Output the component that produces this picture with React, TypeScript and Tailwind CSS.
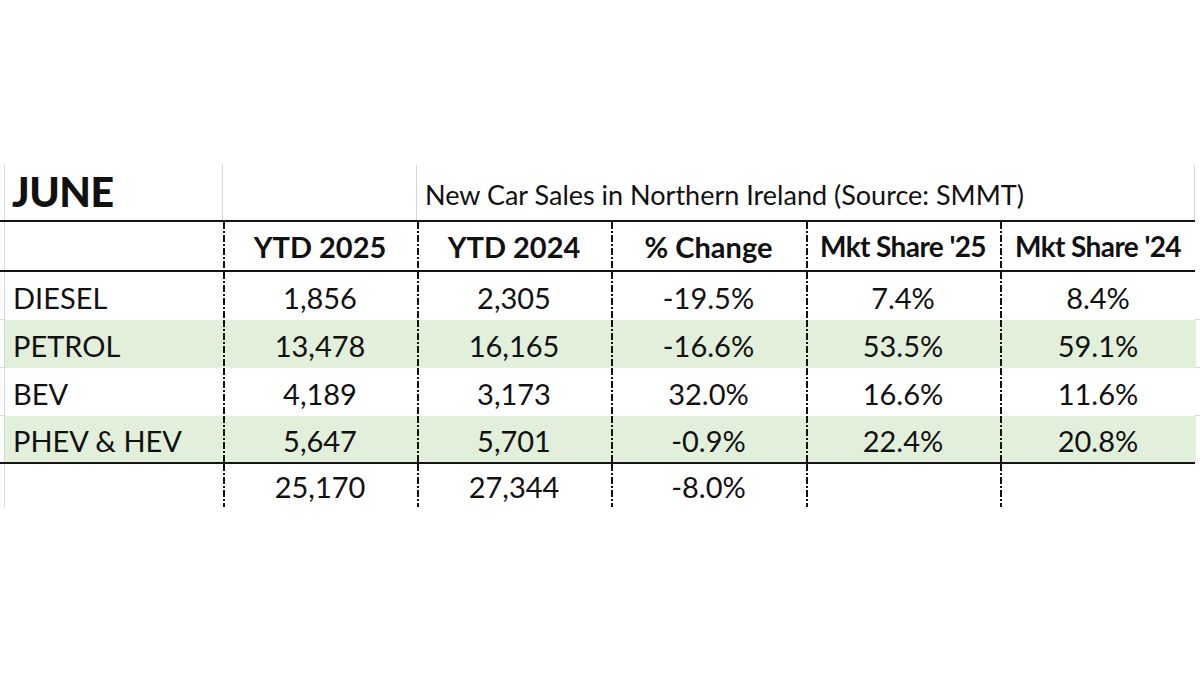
import React from 'react';

const rows = [
  { label: 'DIESEL', a: '1,856', b: '2,305', c: '-19.5%', d: '7.4%', e: '8.4%', green: false },
  { label: 'PETROL', a: '13,478', b: '16,165', c: '-16.6%', d: '53.5%', e: '59.1%', green: true },
  { label: 'BEV', a: '4,189', b: '3,173', c: '32.0%', d: '16.6%', e: '11.6%', green: false },
  { label: 'PHEV & HEV', a: '5,647', b: '5,701', c: '-0.9%', d: '22.4%', e: '20.8%', green: true },
];

const dashDot =
  'bg-[image:repeating-linear-gradient(to_bottom,#111_0,#111_7px,transparent_7px,transparent_9px,#111_9px,#111_11px,transparent_11px,transparent_13px)] bg-no-repeat bg-[length:2px_100%] bg-left';

// one row of the sheet: small gridline stubs outside the table on both sides
const Row = ({ children, h, stub = true }: { children: React.ReactNode; h: string; stub?: boolean }) => (
  <div className={`flex ${h}`}>
    <div className={`w-[4px] ${stub ? 'border-b border-[#dadada]' : ''}`} />
    <div className="grid grid-cols-[218px_194px_194px_195px_194px_196px] w-[1191px] border-l border-r border-[#d6d6d6]">
      {children}
    </div>
    <div className={`w-[5px] ${stub ? 'border-b border-[#dadada]' : ''}`} />
  </div>
);

const Cell = ({ children, line = true, green = false, left = false, pad = 'pt-[2px]' }: { children?: React.ReactNode; line?: boolean; green?: boolean; left?: boolean; pad?: string }) => (
  <div
    className={`flex items-center ${pad} ${left ? 'justify-start pl-[8px]' : 'justify-center'} ${green ? 'bg-[#e2efda]' : 'bg-white'} ${line ? dashDot : ''}`}
  >
    {children}
  </div>
);

const BlackLine = () => (
  <div className="flex">
    <div className="h-[2px] w-[1195px] bg-[#141414]" />
  </div>
);

const num = 'text-[29px] leading-none';
const head = 'text-[29px] font-bold leading-none';
const share = 'text-[28px] font-bold leading-none tracking-[-0.6px]';

export default function App() {
  return (
    <div className="w-[1200px] h-[675px] bg-white font-['Lato',sans-serif] text-[#111] overflow-hidden">
      <div className="h-[165px]" />

      {/* title row */}
      <div className="flex h-[55px]">
        <div className="w-[4px]" />
        <div className="flex w-[1191px] border-l border-r border-[#d6d6d6]">
          <div className="w-[218px] border-r border-[#d6d6d6] flex items-end pl-[7px] pb-[8px]">
            <span className="text-[41px] font-black leading-none tracking-[-0.5px]">JUNE</span>
          </div>
          <div className="w-[194px] border-r border-[#d6d6d6]" />
          <div className="flex-1 flex items-end pl-[8px] pb-[12px]">
            <span className="text-[27px] leading-none whitespace-nowrap">New Car Sales in Northern Ireland (Source: SMMT)</span>
          </div>
        </div>
        <div className="w-[5px]" />
      </div>

      <BlackLine />

      {/* header row */}
      <Row h="h-[48px]" stub={false}>
        <Cell line={false} pad="pt-0" />
        <Cell pad="pt-0"><span className={head}>YTD 2025</span></Cell>
        <Cell pad="pt-0"><span className={head}>YTD 2024</span></Cell>
        <Cell pad="pt-0"><span className={head}>% Change</span></Cell>
        <Cell pad="pt-0"><span className={share}>Mkt Share '25</span></Cell>
        <Cell pad="pt-0"><span className={share}>Mkt Share '24</span></Cell>
      </Row>

      <BlackLine />

      {rows.map((r, i) => (
        <Row key={r.label} h={i === 3 ? 'h-[46px]' : 'h-[48px]'} stub={i < 3}>
          <Cell line={false} green={r.green} left><span className={num}>{r.label}</span></Cell>
          <Cell green={r.green}><span className={num}>{r.a}</span></Cell>
          <Cell green={r.green}><span className={num}>{r.b}</span></Cell>
          <Cell green={r.green}><span className={num}>{r.c}</span></Cell>
          <Cell green={r.green}><span className={num}>{r.d}</span></Cell>
          <Cell green={r.green}><span className={num}>{r.e}</span></Cell>
        </Row>
      ))}

      <BlackLine />

      {/* totals */}
      <Row h="h-[43px]" stub={false}>
        <Cell line={false} />
        <Cell><span className={num}>25,170</span></Cell>
        <Cell><span className={num}>27,344</span></Cell>
        <Cell><span className={num}>-8.0%</span></Cell>
        <Cell />
        <Cell />
      </Row>
    </div>
  );
}
